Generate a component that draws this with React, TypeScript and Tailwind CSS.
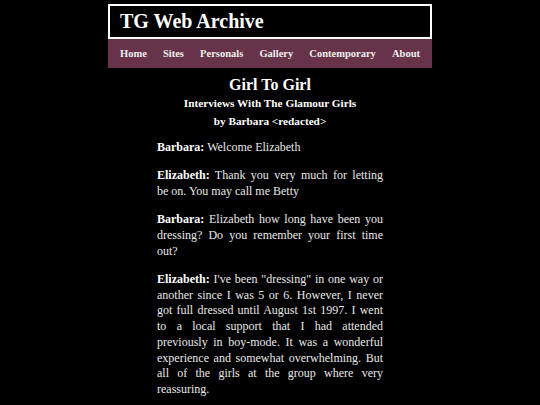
import React from "react";

const NAV = ["Home", "Sites", "Personals", "Gallery", "Contemporary", "About"];

const INTERVIEW: { who: string; text: string }[] = [
  { who: "Barbara:", text: "Welcome Elizabeth" },
  { who: "Elizabeth:", text: "Thank you very much for letting be on. You may call me Betty" },
  {
    who: "Barbara:",
    text: "Elizabeth how long have been you dressing? Do you remember your first time out?",
  },
  {
    who: "Elizabeth:",
    text:
      'I\'ve been "dressing" in one way or another since I was 5 or 6. However, I never got full dressed until August 1st 1997. I went to a local support that I had attended previously in boy-mode. It was a wonderful experience and somewhat overwhelming. But all of the girls at the group where very reassuring.',
  },
];

export default function App() {
  return (
    <div
      className="min-h-[405px] h-[405px] overflow-hidden bg-black text-[#e8e8e8]"
      style={{ fontFamily: '"Liberation Serif", "Times New Roman", serif' }}
    >
      <div className="mx-auto w-[324px] pt-[4px]">
        {/* masthead */}
        <div className="border-2 border-white bg-black pl-[10px] pt-[1px] pb-[1px]">
          <div className="text-[20px] leading-[29px] font-bold text-white">TG Web Archive</div>
        </div>
        <nav className="flex h-[29px] items-center justify-between bg-[#663349] px-3">
          {NAV.map((n) => (
            <a key={n} className="text-[10.5px] font-bold text-[#eeeeee]">
              {n}
            </a>
          ))}
        </nav>
      </div>

      <div className="mx-auto mt-[6px] w-[226px]">
        <h1 className="text-center text-[16px] leading-[21px] font-bold text-white">Girl To Girl</h1>
        <h2 className="text-center text-[11.25px] leading-[17.5px] font-bold text-white">
          Interviews With The Glamour Girls
        </h2>
        <h3 className="text-center text-[11.25px] leading-[17.5px] font-bold text-white">
          by Barbara &lt;redacted&gt;
        </h3>

        <div className="mt-[10px]">
          {INTERVIEW.map((p, i) => (
            <p key={i} className="mb-[12.6px] text-justify text-[12px] leading-[15.7px]">
              <b className="font-bold text-white">{p.who}</b> {p.text}
            </p>
          ))}
        </div>
      </div>
    </div>
  );
}
